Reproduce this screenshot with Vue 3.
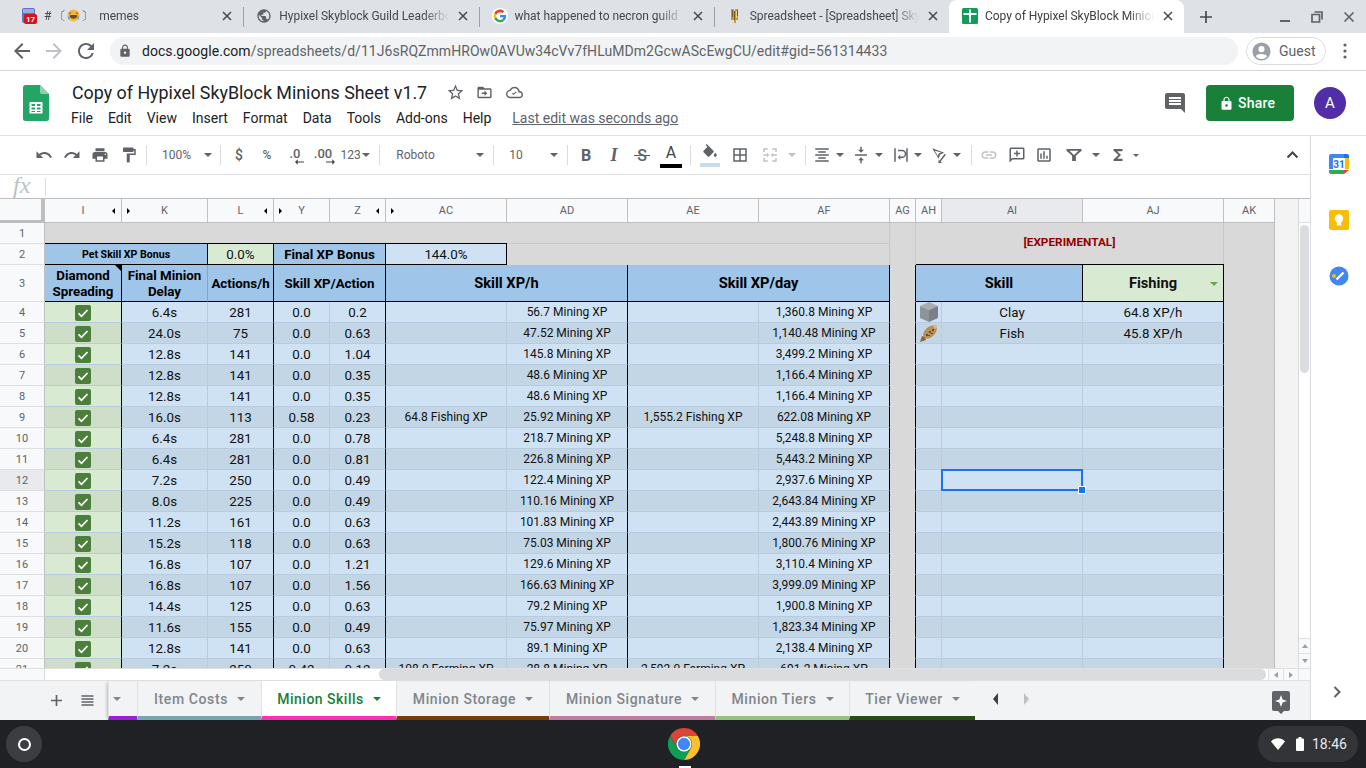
<script setup>
import { computed } from 'vue';

const browserTabs = [
  { id: 'discord', title: 'memes', prefix: '# 〔', suffix: '〕' },
  { id: 'globe', title: 'Hypixel Skyblock Guild Leaderboard' },
  { id: 'google', title: 'what happened to necron guild' },
  { id: 'sword', title: 'Spreadsheet - [Spreadsheet] Skyblock' },
  { id: 'sheets', title: 'Copy of Hypixel SkyBlock Minions Sheet', active: true },
];

const menus = ['File', 'Edit', 'View', 'Insert', 'Format', 'Data', 'Tools', 'Add-ons', 'Help'];

const P = {
  undo: 'M12.5 8c-2.65 0-5.05.99-6.9 2.6L2 7v9h9l-3.62-3.62c1.39-1.16 3.16-1.88 5.12-1.88 3.54 0 6.55 2.31 7.6 5.5l2.37-.78C21.08 11.03 17.15 8 12.5 8z',
  redo: 'M18.4 10.6C16.55 8.99 14.15 8 11.5 8c-4.65 0-8.58 3.03-9.96 7.22L3.9 16c1.05-3.19 4.05-5.5 7.6-5.5 1.95 0 3.73.72 5.12 1.88L13 16h9V7l-3.6 3.6z',
  print: 'M19 8H5c-1.66 0-3 1.34-3 3v6h4v4h12v-4h4v-6c0-1.66-1.34-3-3-3zm-3 11H8v-5h8v5zm3-7c-.55 0-1-.45-1-1s.45-1 1-1 1 .45 1 1-.45 1-1 1zm-1-9H6v4h12V3z',
  paint: 'M18 4V3c0-.55-.45-1-1-1H5c-.55 0-1 .45-1 1v4c0 .55.45 1 1 1h12c.55 0 1-.45 1-1V6h1v4H9v11c0 .55.45 1 1 1h2c.55 0 1-.45 1-1v-9h8V4h-3z',
  borders: 'M3 3v18h18V3H3zm8 16H5v-6h6v6zm0-8H5V5h6v6zm8 8h-6v-6h6v6zm0-8h-6V5h6v6z',
  merge: 'M3 3h6v2H5v3H3zM15 3h6v5h-2V5h-4zM3 16h2v3h4v2H3zM19 16h2v5h-6v-2h4zM3 11h5V9l3 3-3 3v-2H3zM21 11h-5V9l-3 3 3 3v-2h5z',
  align: 'M7 15v2h10v-2H7zm-4 6h18v-2H3v2zm0-8h18v-2H3v2zm4-6v2h10V7H7zM3 3v2h18V3H3z',
  valign: 'M8 19h3v4h2v-4h3l-4-4-4 4zm8-14h-3V1h-2v4H8l4 4 4-4zM4 11v2h16v-2H4z',
  wrap: 'M3 3h2v18H3zM19 3h2v18h-2zM8 7h5.5a3.5 3.5 0 0 1 0 7H11v-2.5L7.5 15l3.5 3.5V16h2.5a5.5 5.5 0 0 0 0-11H8z',
  rotate: 'M3 3l16 6-5.5 2.2L11.5 17zM6.4 6.2l4 7.2 1.2-3.4 3.4-1.2zM12.6 19.6l7-9.2 1.6 1.2-7 9.2 2 1.5-5 .7.4-4.9z',
  link: 'M3.9 12c0-1.71 1.39-3.1 3.1-3.1h4V7H7c-2.76 0-5 2.24-5 5s2.24 5 5 5h4v-1.9H7c-1.71 0-3.1-1.39-3.1-3.1zM8 13h8v-2H8v2zm9-6h-4v1.9h4c1.71 0 3.1 1.39 3.1 3.1s-1.39 3.1-3.1 3.1h-4V17h4c2.76 0 5-2.24 5-5s-2.24-5-5-5z',
  comment: 'M20 2H4c-1.1 0-2 .9-2 2v18l4-4h14c1.1 0 2-.9 2-2V4c0-1.1-.9-2-2-2zm0 14H5.17L4 17.17V4h16v12zM13 6h-2v3H8v2h3v3h2v-3h3V9h-3z',
  chart: 'M19 3H5c-1.1 0-2 .9-2 2v14c0 1.1.9 2 2 2h14c1.1 0 2-.9 2-2V5c0-1.1-.9-2-2-2zm0 16H5V5h14v14zM7 10h2v7H7zm4-3h2v10h-2zm4 6h2v4h-2z',
  filter: 'M2 4h20v2.2L14.5 13v7h-5v-7L2 6.2zM6 6.2l5.5 5.6h1L18 6.2z',
  sigma: 'M18 4H6v2l6.5 6L6 18v2h12v-3h-7l5-5-5-5h7z',
};

// c = horizontal centre of the toolbar item
const toolItems = [
  { c: 44, icon: 'undo' }, { c: 72, icon: 'redo' }, { c: 100, icon: 'print' }, { c: 129, icon: 'paint' },
  { c: 146.5, sep: true },
  { c: 176.5, text: '100%' }, { c: 208, arrow: true },
  { c: 220.5, sep: true },
  { c: 239, text: '$', money: true }, { c: 267, text: '%', small: true },
  { c: 295, dec: '.0', dir: 'left' }, { c: 323, dec: '.00', dir: 'right' },
  { c: 350.5, text: '123' }, { c: 366, arrow: true },
  { c: 379.5, sep: true },
  { c: 415.5, text: 'Roboto' }, { c: 480, arrow: true },
  { c: 493.5, sep: true },
  { c: 516, text: '10' }, { c: 554, arrow: true },
  { c: 567.5, sep: true },
  { c: 586, glyph: 'B', cls: 'g-b' }, { c: 614, glyph: 'I', cls: 'g-i' }, { c: 642, glyph: 'S', cls: 'g-s' }, { c: 671, glyph: 'A', cls: 'g-a' },
  { c: 690.5, sep: true },
  { c: 710, fill: true }, { c: 740, icon: 'borders' }, { c: 770, icon: 'merge', off: true }, { c: 792, arrow: true, off: true },
  { c: 805.5, sep: true },
  { c: 822, icon: 'align' }, { c: 840, arrow: true }, { c: 861, icon: 'valign' }, { c: 879, arrow: true },
  { c: 901, icon: 'wrap' }, { c: 918, arrow: true }, { c: 939, icon: 'rotate' }, { c: 957, arrow: true },
  { c: 971.5, sep: true },
  { c: 989, icon: 'link', off: true }, { c: 1017, icon: 'comment' }, { c: 1044, icon: 'chart' },
  { c: 1074, icon: 'filter' }, { c: 1096, arrow: true }, { c: 1118, icon: 'sigma' }, { c: 1136, arrow: true, small: true },
];

const tools = computed(() => toolItems.map((item, i) => ({
  ...item,
  gap: item.c - (i ? toolItems[i - 1].c : 0),
})));

const columns = [
  { n: 'I', hideR: true }, { n: 'K', hideL: true }, { n: 'L', hideR: true }, { n: 'Y', hideL: true },
  { n: 'Z', hideR: true }, { n: 'AC', hideL: true }, { n: 'AD' }, { n: 'AE' }, { n: 'AF' },
  { n: 'AG' }, { n: 'AH' }, { n: 'AI', sel: true }, { n: 'AJ' }, { n: 'AK' },
];

const rows = [
  ['6.4s', '281', '0.0', '0.2', '', '56.7 Mining XP', '', '1,360.8 Mining XP'],
  ['24.0s', '75', '0.0', '0.63', '', '47.52 Mining XP', '', '1,140.48 Mining XP'],
  ['12.8s', '141', '0.0', '1.04', '', '145.8 Mining XP', '', '3,499.2 Mining XP'],
  ['12.8s', '141', '0.0', '0.35', '', '48.6 Mining XP', '', '1,166.4 Mining XP'],
  ['12.8s', '141', '0.0', '0.35', '', '48.6 Mining XP', '', '1,166.4 Mining XP'],
  ['16.0s', '113', '0.58', '0.23', '64.8 Fishing XP', '25.92 Mining XP', '1,555.2 Fishing XP', '622.08 Mining XP'],
  ['6.4s', '281', '0.0', '0.78', '', '218.7 Mining XP', '', '5,248.8 Mining XP'],
  ['6.4s', '281', '0.0', '0.81', '', '226.8 Mining XP', '', '5,443.2 Mining XP'],
  ['7.2s', '250', '0.0', '0.49', '', '122.4 Mining XP', '', '2,937.6 Mining XP'],
  ['8.0s', '225', '0.0', '0.49', '', '110.16 Mining XP', '', '2,643.84 Mining XP'],
  ['11.2s', '161', '0.0', '0.63', '', '101.83 Mining XP', '', '2,443.89 Mining XP'],
  ['15.2s', '118', '0.0', '0.63', '', '75.03 Mining XP', '', '1,800.76 Mining XP'],
  ['16.8s', '107', '0.0', '1.21', '', '129.6 Mining XP', '', '3,110.4 Mining XP'],
  ['16.8s', '107', '0.0', '1.56', '', '166.63 Mining XP', '', '3,999.09 Mining XP'],
  ['14.4s', '125', '0.0', '0.63', '', '79.2 Mining XP', '', '1,900.8 Mining XP'],
  ['11.6s', '155', '0.0', '0.49', '', '75.97 Mining XP', '', '1,823.34 Mining XP'],
  ['12.8s', '141', '0.0', '0.63', '', '89.1 Mining XP', '', '2,138.4 Mining XP'],
  ['7.2s', '250', '0.42', '0.12', '108.0 Farming XP', '28.8 Mining XP', '2,592.0 Farming XP', '691.2 Mining XP'],
];

const skillRows = { 0: ['Clay', '64.8 XP/h'], 1: ['Fish', '45.8 XP/h'] };

const sheetTabs = [
  { name: '', width: 29, color: '#9a1fd6', partial: true },
  { name: 'Item Costs', width: 124, color: '#76a5af' },
  { name: 'Minion Skills', width: 135, color: '#ff2fba', active: true },
  { name: 'Minion Storage', width: 153, color: '#783f04' },
  { name: 'Minion Signature', width: 166, color: '#c27ba0' },
  { name: 'Minion Tiers', width: 134, color: '#93c47d' },
  { name: 'Tier Viewer', width: 126, color: '#274e13' },
];
</script>

<template>
  <div class="screen">
    <div class="tabstrip">
      <div v-for="tab in browserTabs" :key="tab.id" class="btab" :class="{ active: tab.active }">
        <svg v-if="tab.id === 'discord'" class="fav" viewBox="0 0 16 16">
          <rect x="1" y="0" width="13" height="15" rx="2" fill="#5b72c9" />
          <rect x="3" y="6" width="13" height="10" rx="2" fill="#d3141b" />
          <rect x="2" y="1" width="11" height="4" fill="#dfe3f5" opacity=".5" />
          <text x="9.5" y="14.3" class="badge">17</text>
        </svg>
        <svg v-else-if="tab.id === 'globe'" class="fav" viewBox="0 0 24 24"><path fill="#5f6368" d="M12 2C6.48 2 2 6.48 2 12s4.48 10 10 10 10-4.48 10-10S17.52 2 12 2zm-1 17.93c-3.95-.49-7-3.85-7-7.93 0-.62.08-1.21.21-1.79L9 15v1c0 1.1.9 2 2 2v1.93zm6.9-2.54c-.26-.81-1-1.39-1.9-1.39h-1v-3c0-.55-.45-1-1-1H8v-2h2c.55 0 1-.45 1-1V7h2c1.1 0 2-.9 2-2v-.41c2.93 1.19 5 4.06 5 7.41 0 2.08-.8 3.97-2.1 5.39z" /></svg>
        <svg v-else-if="tab.id === 'google'" class="fav" viewBox="-6 -6 60 60">
          <circle cx="24" cy="24" r="30" fill="#fff" />
          <path fill="#EA4335" d="M24 9.5c3.54 0 6.71 1.22 9.21 3.6l6.85-6.85C35.9 2.38 30.47 0 24 0 14.62 0 6.51 5.38 2.56 13.22l7.98 6.19C12.43 13.72 17.74 9.5 24 9.5z" />
          <path fill="#4285F4" d="M46.98 24.55c0-1.57-.15-3.09-.38-4.55H24v9.02h12.94c-.58 2.96-2.26 5.48-4.78 7.18l7.73 6c4.51-4.18 7.09-10.36 7.09-17.65z" />
          <path fill="#FBBC05" d="M10.53 28.59c-.48-1.45-.76-2.99-.76-4.59s.27-3.14.76-4.59l-7.98-6.19C.92 16.46 0 20.12 0 24c0 3.88.92 7.54 2.56 10.78l7.97-6.19z" />
          <path fill="#34A853" d="M24 48c6.48 0 11.93-2.13 15.89-5.81l-7.73-6c-2.15 1.45-4.92 2.3-8.16 2.3-6.26 0-11.57-4.22-13.47-9.91l-7.98 6.19C6.51 42.62 14.62 48 24 48z" />
        </svg>
        <svg v-else-if="tab.id === 'sword'" class="fav" viewBox="0 0 16 16">
          <path fill="#c99a2e" d="M4 1h3v2h1V1h3v11H9v3H7v-3H4z" />
          <path fill="#7b5a1e" d="M7 3h1v9H7zM5 2h1v7H5zM10 2h1v6h-1z" />
          <path fill="#e9d48a" d="M9 3h1v7H9z" />
        </svg>
        <svg v-else class="fav" viewBox="0 0 16 16">
          <rect width="16" height="16" rx="1.5" fill="#0f9d58" />
          <path fill="#fff" d="M7 1.5h2V5h5.500v2H9v7.500H7V7H1.500V5H7z" />
        </svg>
        <span class="btab-title">
          <template v-if="tab.prefix">
            {{ tab.prefix }}<svg class="emoji" viewBox="0 0 14 14">
              <circle cx="7" cy="7" r="6.5" fill="#f5b83d" />
              <path d="M3 6.5h8a4 4 0 0 1-8 0z" fill="#6e4a1c" />
              <path d="M2 5l2.5-1M12 5L9.5 4" stroke="#6e4a1c" fill="none" />
              <path d="M1 8h2v3H1zM11 8h2v3h-2z" fill="#5aa9e6" />
            </svg>{{ tab.suffix }}&nbsp;
          </template>{{ tab.title }}
        </span>
        <svg class="btab-x" viewBox="0 0 10 10"><path d="M1 1l8 8M9 1l-8 8" stroke="#45484d" stroke-width="1.5" /></svg>
      </div>
      <svg class="plus" viewBox="0 0 12 12"><path d="M6 0v12M0 6h12" stroke="#45484d" stroke-width="1.7" /></svg>
      <div class="winctl">
        <svg viewBox="0 0 12 12"><path d="M1 10h10" stroke="#5f6368" stroke-width="2" /></svg>
        <svg viewBox="0 0 12 12"><path d="M3.5 1h7.5v7.5M1 3.5h7.5V11H1z" fill="none" stroke="#5f6368" stroke-width="1.7" /></svg>
        <svg viewBox="0 0 12 12"><path d="M1.5 1.5l9 9M10.5 1.5l-9 9" stroke="#5f6368" stroke-width="1.7" /></svg>
      </div>
    </div>

    <div class="omnibar">
      <svg class="nav" viewBox="0 0 24 24"><path fill="#5f6368" d="M20 11H7.83l5.59-5.59L12 4l-8 8 8 8 1.41-1.41L7.83 13H20z" /></svg>
      <svg class="nav" viewBox="0 0 24 24"><path fill="#bdc1c6" d="M12 4l-1.41 1.41L16.17 11H4v2h12.17l-5.58 5.59L12 20l8-8z" /></svg>
      <svg class="nav" viewBox="0 0 24 24"><path fill="#5f6368" d="M17.65 6.35A7.96 7.96 0 0 0 12 4c-4.42 0-7.99 3.58-7.99 8s3.57 8 7.99 8c3.73 0 6.84-2.55 7.73-6h-2.08A5.99 5.99 0 0 1 12 18c-3.31 0-6-2.69-6-6s2.69-6 6-6c1.66 0 3.14.69 4.22 1.78L13 11h7V4l-2.35 2.35z" /></svg>
      <div class="urlbox">
        <svg class="lock" viewBox="0 0 24 24"><path fill="#5f6368" d="M18 8h-1V6c0-2.76-2.24-5-5-5S7 3.24 7 6v2H6c-1.1 0-2 .9-2 2v10c0 1.1.9 2 2 2h12c1.1 0 2-.9 2-2V10c0-1.1-.9-2-2-2zm-6 9c-1.1 0-2-.9-2-2s.9-2 2-2 2 .9 2 2-.9 2-2 2zm3.1-9H8.9V6c0-1.71 1.39-3.1 3.1-3.1 1.71 0 3.1 1.39 3.1 3.1v2z" /></svg>
        <span class="url"><b>docs.google.com</b>/spreadsheets/d/11J6sRQZmmHROw0AVUw34cVv7fHLuMDm2GcwAScEwgCU/edit#gid=561314433</span>
      </div>
      <div class="guest">
        <svg viewBox="0 0 20 20">
          <circle cx="10" cy="10" r="9.5" fill="#9aa0a6" />
          <circle cx="10" cy="7.5" r="3.2" fill="#fff" />
          <path d="M4 15c1-3 10-3 12 0-1.5 2-4 3-6 3s-4.5-1-6-3z" fill="#fff" />
        </svg>
        Guest
      </div>
      <svg class="dots" viewBox="0 0 4 16"><circle cx="2" cy="2" r="1.6" fill="#5f6368" /><circle cx="2" cy="8" r="1.6" fill="#5f6368" /><circle cx="2" cy="14" r="1.6" fill="#5f6368" /></svg>
    </div>

    <div class="docheader">
      <svg class="logo" viewBox="0 0 26 36">
        <path fill="#23a566" d="M2.5 0H17l9 9v24.5a2.5 2.5 0 0 1-2.5 2.5h-21A2.5 2.5 0 0 1 0 33.5v-31A2.5 2.5 0 0 1 2.5 0z" />
        <path fill="#8ed1b1" d="M17 0l9 9h-7a2 2 0 0 1-2-2z" />
        <path fill="#fff" d="M6.5 17h13v11.5h-13zm2 2v2H12v-2zm5.5 0v2h3.5v-2zm-5.5 3.5v2H12v-2zm5.500 0v2h3.500v-2zm-5.500 3.500v1H12v-1zm5.500 0v1h3.500v-1z" fill-rule="evenodd" />
      </svg>
      <div class="docinfo">
        <div class="titleline">
          <span class="doctitle">Copy of Hypixel SkyBlock Minions Sheet v1.7</span>
          <svg class="ti star" viewBox="0 0 24 24"><path fill="#5f6368" d="M22 9.24l-7.19-.62L12 2 9.19 8.63 2 9.24l5.46 4.73L5.82 21 12 17.27 18.18 21l-1.63-7.03L22 9.24zM12 15.4l-3.76 2.27 1-4.28-3.32-2.88 4.38-.38L12 6.1l1.71 4.04 4.38.38-3.32 2.88 1 4.28L12 15.4z" /></svg>
          <svg class="ti folder" viewBox="0 0 24 24"><path fill="#5f6368" fill-rule="evenodd" d="M20 6h-8l-2-2H4c-1.1 0-2 .9-2 2v12c0 1.1.9 2 2 2h16c1.1 0 2-.9 2-2V8c0-1.1-.9-2-2-2zm0 12H4V8h16v10zM12 9l4 4-4 4v-3H8v-2h4z" /></svg>
          <svg class="ti" viewBox="0 0 24 24"><path fill="#5f6368" d="M19.35 10.04C18.67 6.59 15.64 4 12 4 9.11 4 6.6 5.64 5.35 8.04 2.34 8.36 0 10.91 0 14c0 3.31 2.69 6 6 6h13c2.76 0 5-2.24 5-5 0-2.64-2.05-4.78-4.65-4.96zM19 18H6c-2.21 0-4-1.79-4-4s1.79-4 4-4h.71C7.37 7.69 9.48 6 12 6c3.04 0 5.5 2.46 5.5 5.5v.5H19c1.66 0 3 1.34 3 3s-1.34 3-3 3zM10.5 15.5l-2-2 1-1 1 1 3.5-3 1 1z" /></svg>
        </div>
        <div class="menubar">
          <span v-for="m in menus" :key="m">{{ m }}</span>
          <span class="lastedit">Last edit was seconds ago</span>
        </div>
      </div>
      <svg class="chat" viewBox="0 0 24 24"><path fill="#5f6368" d="M21.99 4c0-1.1-.89-2-1.99-2H4c-1.1 0-2 .9-2 2v12c0 1.1.9 2 2 2h14l4 4-.01-18zM18 14H6v-2h12v2zm0-3H6V9h12v2zm0-3H6V6h12v2z" /></svg>
      <div class="share">
        <svg viewBox="0 0 24 24"><path fill="#fff" d="M18 8h-1V6c0-2.76-2.24-5-5-5S7 3.24 7 6v2H6c-1.1 0-2 .9-2 2v10c0 1.1.9 2 2 2h12c1.1 0 2-.9 2-2V10c0-1.1-.9-2-2-2zm-6 9c-1.1 0-2-.9-2-2s.9-2 2-2 2 .9 2 2-.9 2-2 2zm3.1-9H8.9V6c0-1.71 1.39-3.1 3.1-3.1 1.71 0 3.1 1.39 3.1 3.1v2z" /></svg>
        Share
      </div>
      <div class="avatar">A</div>
    </div>

    <div class="workspace">
      <div class="main">
        <div class="toolbar">
          <div
            v-for="(t, i) in tools"
            :key="i"
            class="slot"
            :class="{ off: t.off }"
            :style="{ marginLeft: t.gap + 'px' }"
          >
            <i v-if="t.sep" class="sep"></i>
            <i v-else-if="t.arrow" class="tri" :class="{ small: t.small }"></i>
            <svg v-else-if="t.icon" class="tool" viewBox="0 0 24 24"><path :d="P[t.icon]" fill-rule="evenodd" /></svg>
            <span v-else-if="t.text" class="tooltext" :class="{ money: t.money, small: t.small }">{{ t.text }}</span>
            <span v-else-if="t.glyph" class="glyph" :class="t.cls">{{ t.glyph }}</span>
            <span v-else-if="t.dec" class="dec">{{ t.dec }}
              <svg viewBox="0 0 10 6">
                <path v-if="t.dir === 'left'" d="M10 2.4H3V0L0 3l3 3V3.6h7z" fill="#444" />
                <path v-else d="M0 2.4h7V0l3 3-3 3V3.6H0z" fill="#444" />
              </svg>
            </span>
            <svg v-else-if="t.fill" class="tool fillicon" viewBox="0 0 24 24"><path d="M16.56 8.94L7.62 0 6.21 1.41l2.38 2.38-5.15 5.15c-.59.59-.59 1.54 0 2.12l5.5 5.5c.29.29.68.44 1.06.44s.77-.15 1.06-.44l5.5-5.5c.59-.58.59-1.53 0-2.12zM19 11.5s-2 2.17-2 3.5c0 1.1.9 2 2 2s2-.9 2-2c0-1.33-2-3.5-2-3.5z" /></svg>
            <i v-if="t.fill" class="fillbar"></i>
          </div>
          <svg class="collapse" viewBox="0 0 12 8"><path d="M1 6.5l5-5 5 5" fill="none" stroke="#444" stroke-width="2" /></svg>
        </div>

        <div class="formula">
          <span class="fx">fx</span>
          <i class="fxsep"></i>
        </div>

        <div class="gridarea">
          <div class="sheet">
            <div class="corner"></div>
            <div
              v-for="c in columns"
              :key="c.n"
              class="colhead"
              :class="{ selected: c.sel }"
            >
              <i v-if="c.hideR" class="hide hide-r"></i>
              {{ c.n }}
              <i v-if="c.hideL" class="hide hide-l"></i>
            </div>

            <div class="rownum">1</div>
            <div class="cell gray span9 lined"></div>
            <div class="cell gray faint"></div>
            <div class="cell gray exp">[EXPERIMENTAL]</div>
            <div class="cell gray end"></div>

            <div class="rownum">2</div>
            <div class="cell head2 span2 topline small">Pet Skill XP Bonus</div>
            <div class="cell green topline bk">0.0%</div>
            <div class="cell head2 span2 topline">Final XP Bonus</div>
            <div class="cell plain topline bk">144.0%</div>
            <div class="cell gray span3 faint"></div>
            <div class="cell gray faint"></div>
            <div class="cell gray end"></div>

            <div class="rownum">3</div>
            <div class="cell head bk rel">Diamond Spreading<i class="note"></i></div>
            <div class="cell head softline">Final Minion Delay</div>
            <div class="cell head bk">Actions/h</div>
            <div class="cell head bk span2">Skill XP/Action</div>
            <div class="cell head bk span2 big">Skill XP/h</div>
            <div class="cell head bk span2 big">Skill XP/day</div>
            <div class="cell gray bk"></div>
            <div class="cell head bk span2 big topline">Skill</div>
            <div class="cell headgreen bk big topline rel">Fishing<i class="drop"></i></div>
            <div class="cell gray end"></div>

            <template v-for="(r, i) in rows" :key="i">
              <div class="rownum" :class="{ selected: i === 8 }">{{ i + 4 }}</div>
              <div class="cell check bk" :class="{ alt: i % 2 }">
                <svg viewBox="0 0 16 16">
                  <rect width="16" height="16" rx="2" fill="#4c7f3b" />
                  <path d="M3.5 8.3l3 3 6-6.3" fill="none" stroke="#fff" stroke-width="1.7" />
                </svg>
              </div>
              <div class="cell" :class="{ alt: i % 2 }">{{ r[0] }}</div>
              <div class="cell bk" :class="{ alt: i % 2 }">{{ r[1] }}</div>
              <div class="cell" :class="{ alt: i % 2 }">{{ r[2] }}</div>
              <div class="cell bk" :class="{ alt: i % 2 }">{{ r[3] }}</div>
              <div class="cell xp" :class="{ alt: i % 2 }">{{ r[4] }}</div>
              <div class="cell xp bk" :class="{ alt: i % 2 }">{{ r[5] }}</div>
              <div class="cell xp" :class="{ alt: i % 2 }">{{ r[6] }}</div>
              <div class="cell xp bk" :class="{ alt: i % 2 }">{{ r[7] }}</div>
              <div class="cell gray bk"></div>
              <div class="cell iconcell" :class="{ alt: i % 2 }">
                <svg v-if="i === 0" viewBox="0 0 20 20">
                  <path fill="#a8acb3" d="M10 0l9 4-9 4-9-4z" />
                  <path fill="#8f949b" d="M1 4l9 4v12l-9-4z" />
                  <path fill="#7b8088" d="M19 4l-9 4v12l9-4z" />
                </svg>
                <svg v-else-if="i === 1" viewBox="0 0 20 20">
                  <path fill="#8a6536" d="M1 19l2-6 3 1 1 3z" />
                  <ellipse cx="11" cy="9" rx="8" ry="5" transform="rotate(-42 11 9)" fill="#b98f5a" />
                  <path fill="#d9b98a" d="M14 3l3-2 1 3-2 2z" />
                  <path fill="#6f4d24" d="M7 11h2v2H7zM10 8h2v2h-2zM13 6h2v2h-2zM9 12h2v1H9zM12 10h2v1h-2z" />
                </svg>
              </div>
              <div class="cell rel" :class="{ alt: i % 2 }">
                {{ skillRows[i] ? skillRows[i][0] : '' }}
                <i v-if="i === 8" class="selbox"><b></b></i>
              </div>
              <div class="cell bk" :class="{ alt: i % 2 }">{{ skillRows[i] ? skillRows[i][1] : '' }}</div>
              <div class="cell gray end"></div>
            </template>
          </div>
          <div class="offgrid"></div>
          <div class="vscroll">
            <div class="vhead"></div>
            <div class="vtrack"><div class="vthumb"></div></div>
            <div class="vbtn"><i class="up"></i></div>
            <div class="vbtn"><i class="down"></i></div>
          </div>
        </div>

        <div class="hscroll">
          <div class="hgutter"></div>
          <div class="htrack"><div class="hthumb"></div></div>
          <div class="hbtn"><i class="left"></i></div>
          <div class="hbtn"><i class="right"></i></div>
          <div class="hbtn blank"></div>
        </div>

        <div class="sheetbar">
          <svg class="addsheet" viewBox="0 0 12 12"><path d="M6 0v12M0 6h12" stroke="#5f6368" stroke-width="1.8" /></svg>
          <svg class="allsheets" viewBox="0 0 12 12"><path d="M0 1h12M0 4h12M0 7h12M0 10h12" stroke="#5f6368" stroke-width="1.5" /></svg>
          <div class="tabs">
            <div
              v-for="s in sheetTabs"
              :key="s.name"
              class="stab"
              :class="{ active: s.active, partial: s.partial }"
              :style="{ width: s.width + 'px', borderBottomColor: s.color }"
            >
              {{ s.name }}<i class="stri"></i>
            </div>
          </div>
          <i class="pager pl"></i>
          <i class="pager pr"></i>
          <svg class="explore" viewBox="0 0 18 23">
            <path fill="#5f6368" d="M2 0h14a2 2 0 0 1 2 2v16a2 2 0 0 1-2 2h-4l-3 3-3-3H2a2 2 0 0 1-2-2V2a2 2 0 0 1 2-2z" />
            <path fill="#fff" d="M9 4l1.6 4.4L15 10l-4.4 1.6L9 16l-1.6-4.4L3 10l4.4-1.600z" />
          </svg>
        </div>
      </div>

      <aside class="sidepanel">
        <svg viewBox="0 0 20 20" class="side">
          <path fill="#fff" d="M4 4h12v12H4z" />
          <path fill="#4285f4" d="M2 0h13v4H4v11H0V2a2 2 0 0 1 2-2z" />
          <path fill="#1a73e8" d="M15 0h3a2 2 0 0 1 2 2v2h-5z" />
          <path fill="#fbbc04" d="M16 4h4v11h-4z" />
          <path fill="#34a853" d="M4 16h11v4H2a2 2 0 0 1-2-2v-2z" />
          <path fill="#ea4335" d="M15 16h5l-5 4z" />
          <text x="10" y="14" class="cal">31</text>
        </svg>
        <svg viewBox="0 0 20 20" class="side">
          <rect width="20" height="20" rx="2" fill="#fbbc04" />
          <circle cx="10" cy="8.5" r="4.2" fill="#fff" />
          <rect x="7.8" y="12" width="4.4" height="3.5" fill="#fff" />
        </svg>
        <svg viewBox="0 0 20 20" class="side">
          <circle cx="10" cy="10" r="9.5" fill="#4285f4" />
          <path d="M7.5 13.5l7-7" stroke="#fff" stroke-width="2.4" />
          <circle cx="5" cy="10" r="2" fill="#fbbc04" />
        </svg>
        <svg viewBox="0 0 8 12" class="sidechev"><path d="M1.5 1l5 5-5 5" fill="none" stroke="#5f6368" stroke-width="2" /></svg>
      </aside>
    </div>

    <div class="shelf">
      <div class="launcher"><i></i></div>
      <div class="shelfapp">
        <svg viewBox="0 0 48 48">
          <path fill="#db4437" d="M24 0a24 24 0 0 1 20.8 12H24a12 12 0 0 0-10.4 18L3.2 12A24 24 0 0 1 24 0z" />
          <path fill="#fbc02d" d="M44.8 12A24 24 0 0 1 24 48l10.4-18A12 12 0 0 0 24 12z" />
          <path fill="#0f9d58" d="M24 48A24 24 0 0 1 3.2 12l10.4 18a12 12 0 0 0 20.8 0z" />
          <circle cx="24" cy="24" r="11.5" fill="#fff" />
          <circle cx="24" cy="24" r="9.2" fill="#4285f4" />
        </svg>
        <i class="running"></i>
      </div>
      <div class="status">
        <svg viewBox="0 0 14 12" class="wifi"><path fill="#fff" d="M0 3.5C4-.9 10-.9 14 3.5L7 12z" /></svg>
        <svg viewBox="0 0 8 14" class="battery"><path fill="#fff" d="M2.5 0h3v1.5H7a1 1 0 0 1 1 1V13a1 1 0 0 1-1 1H1a1 1 0 0 1-1-1V2.5a1 1 0 0 1 1-1h1.5z" /></svg>
        <span>18:46</span>
      </div>
    </div>
  </div>
</template>

<style>
html, body {
  margin: 0;
  overflow: hidden;
}
</style>

<style scoped>
.screen {
  width: 1366px;
  height: 768px;
  display: flex;
  flex-direction: column;
  overflow: hidden;
  background: #fff;
  font-family: Roboto, "Liberation Sans", sans-serif;
  color: #000;
}

i { font-style: normal; display: block; }

/* browser tabs */
.tabstrip {
  height: 33px;
  flex: none;
  background: #dee1e6;
  display: flex;
  align-items: center;
  padding-left: 8px;
  position: relative;
}
.btab {
  width: 235.25px;
  height: 33px;
  flex: none;
  display: flex;
  align-items: center;
  box-sizing: border-box;
  padding: 0 10px 1px 13px;
  position: relative;
  font-size: 12px;
  letter-spacing: -.03px;
  color: #45484d;
}
.btab + .btab::before {
  content: '';
  position: absolute;
  left: 0;
  top: 7px;
  height: 20px;
  width: 1px;
  background: #9aa0a6;
}
.btab.active {
  background: #fff;
  border-radius: 8px 8px 0 0;
  color: #3c4043;
}
.btab.active::before { display: none; }
.fav { width: 16px; height: 16px; flex: none; margin-right: 7px; }
.badge { font: bold 8px Roboto, sans-serif; fill: #fff; text-anchor: middle; }
.emoji { width: 13px; height: 13px; vertical-align: -2px; margin: 0 1px; }
.btab-title {
  flex: 1;
  white-space: nowrap;
  overflow: hidden;
  -webkit-mask-image: linear-gradient(90deg, #000 85%, transparent 100%);
  mask-image: linear-gradient(90deg, #000 85%, transparent 100%);
  margin-right: 9px;
}
.btab-x { width: 10px; height: 10px; flex: none; margin-right: 1px; }
.plus { width: 12px; height: 12px; margin-left: 16px; flex: none; }
.winctl {
  margin-left: auto;
  display: flex;
  gap: 20px;
  padding-right: 11px;
}
.winctl svg { width: 12px; height: 12px; }

/* omnibox */
.omnibar {
  height: 38px;
  flex: none;
  box-sizing: border-box;
  display: flex;
  align-items: center;
  border-bottom: 1px solid #d4d6d9;
  padding: 0 0 1px 10px;
}
.nav { width: 24px; height: 24px; flex: none; margin-right: 8px; }
.urlbox {
  width: 1128px;
  height: 28px;
  margin-left: 4px;
  background: #f1f3f4;
  border-radius: 14px;
  display: flex;
  align-items: center;
  box-sizing: border-box;
  padding-left: 8px;
}
.lock { width: 14px; height: 14px; margin-right: 10px; flex: none; }
.url { font-size: 14px; color: #5f6368; white-space: nowrap; letter-spacing: .05px; }
.url b { font-weight: 400; color: #202124; }
.guest {
  width: 80px;
  height: 28px;
  box-sizing: border-box;
  margin-left: 8px;
  border: 1px solid #dadce0;
  border-radius: 14px;
  display: flex;
  align-items: center;
  gap: 8px;
  padding-left: 5px;
  font-size: 14px;
  color: #5f6368;
}
.guest svg { width: 19px; height: 19px; }
.dots { width: 4px; height: 16px; margin-left: 17px; }

/* docs header */
.docheader {
  height: 64px;
  flex: none;
  display: flex;
  align-items: center;
  position: relative;
  padding-left: 23px;
  box-sizing: border-box;
}
.logo { width: 26px; height: 36px; flex: none; }
.docinfo { margin-left: 22px; width: 640px; flex: none; padding-bottom: 1px; }
.titleline {
  display: flex;
  align-items: center;
  height: 28px;
  padding-top: 4px;
  box-sizing: border-box;
}
.doctitle { font-size: 17.85px; color: #202124; white-space: nowrap; margin-left: 1px; }
.ti { width: 17px; height: 17px; margin-left: 13px; flex: none; }
.star { width: 19px; height: 19px; margin-left: 19px; }
.folder { margin-left: 11px; }
.menubar {
  display: flex;
  gap: 15px;
  font-size: 14px;
  color: #202124;
  height: 22px;
  align-items: center;
  margin-top: 3px;
}
.lastedit {
  margin-left: 6px;
  color: #5f6368;
  text-decoration: underline;
}
.chat { width: 24px; height: 24px; margin-left: 452px; flex: none; }
.share {
  width: 88px;
  height: 36px;
  margin-left: 19px;
  flex: none;
  background: #188038;
  border-radius: 4px;
  color: #fff;
  font-size: 14px;
  font-weight: 500;
  letter-spacing: .25px;
  display: flex;
  align-items: center;
  gap: 4px;
  padding-left: 13px;
  box-sizing: border-box;
}
.share svg { width: 15px; height: 15px; }
.avatar {
  width: 32px;
  height: 32px;
  margin-left: 20px;
  flex: none;
  border-radius: 50%;
  background: #512da8;
  color: #fff;
  font-size: 15px;
  display: flex;
  align-items: center;
  justify-content: center;
}

/* body */
.workspace { flex: 1; min-height: 0; display: flex; }
.main { width: 1310px; flex: none; display: flex; flex-direction: column; min-height: 0; }

.toolbar {
  height: 40px;
  flex: none;
  box-sizing: border-box;
  border-top: 1px solid #e0e0e0;
  border-bottom: 1px solid #e0e0e0;
  display: flex;
  align-items: center;
  position: relative;
}
.slot {
  flex: none;
  width: 0;
  height: 24px;
  display: flex;
  align-items: center;
  justify-content: center;
  position: relative;
  color: #444;
  white-space: nowrap;
}
.slot.off { opacity: .4; }
.sep { width: 1px; height: 20px; background: #dadce0; flex: none; }
.tri {
  width: 0;
  height: 0;
  border: 4px solid transparent;
  border-top: 4px solid #5f6368;
  border-bottom: 0;
  flex: none;
}
.tri.small { border-width: 3px 3px 0; }
.tool { width: 18px; height: 18px; flex: none; fill: #5f6368; overflow: visible; }
.tooltext { font-size: 12px; color: #5f6368; flex: none; }
.tooltext.money { font-size: 14px; font-weight: 500; }
.tooltext.small { font-size: 12px; font-weight: 500; }
.dec {
  font-size: 13px;
  font-weight: 500;
  color: #5f6368;
  position: relative;
  line-height: 1;
  margin-top: -3px;
  flex: none;
}
.dec svg { position: absolute; width: 9px; height: 6px; right: -3px; bottom: -5px; }
.glyph { font-size: 16px; font-weight: 700; color: #5f6368; position: relative; flex: none; }
.g-i { font-family: "Liberation Serif", serif; font-style: italic; font-size: 18px; }
.g-s { font-weight: 500; }
.g-s::after {
  content: '';
  position: absolute;
  left: -3px;
  right: -3px;
  top: 9px;
  height: 1.5px;
  background: #5f6368;
}
.g-a {
  font-weight: 400;
  font-size: 16px;
  color: #444;
  line-height: 16px;
  margin-top: -4px;
}
.g-a::after {
  content: '';
  position: absolute;
  left: -6px;
  right: -6px;
  bottom: -7px;
  height: 4px;
  background: #000;
}
.fillicon { transform: translateY(-2px); }
.fillbar {
  position: absolute;
  left: -10px;
  width: 20px;
  bottom: 0;
  height: 4px;
  background: #c6dcef;
}
.collapse { position: absolute; left: 1286px; top: 15px; width: 13px; height: 8px; }

.formula {
  height: 24px;
  flex: none;
  box-sizing: border-box;
  border-bottom: 1px solid #bdbdbd;
  display: flex;
  align-items: center;
}
.fx {
  width: 45px;
  padding: 0 0 4px 13px;
  box-sizing: border-box;
  font-family: "Liberation Serif", serif;
  font-style: italic;
  font-size: 24px;
  line-height: 20px;
  color: #bdc1c6;
}
.fxsep { width: 1px; height: 18px; background: #dadce0; }

/* grid */
.gridarea { height: 469px; flex: none; display: flex; overflow: hidden; }
.sheet {
  width: 1275px;
  flex: none;
  display: grid;
  grid-template-columns: 45px 77px 86px 66px 56px 56px 121px 121px 131px 131px 26px 26px 141px 141px 51px;
  grid-template-rows: 24px 21px 21px 37px;
  grid-auto-rows: 21px;
  align-content: start;
  font-size: 13.33px;
  overflow: hidden;
}
.corner {
  background: #f8f9fa;
  border-right: 4px solid #bebebe;
  border-bottom: 3px solid #bebebe;
  box-sizing: border-box;
}
.colhead {
  background: #f8f9fa;
  border-right: 1px solid #c0c0c0;
  border-bottom: 1px solid #c0c0c0;
  box-sizing: border-box;
  font-size: 11px;
  color: #5f6368;
  display: flex;
  align-items: center;
  justify-content: center;
  position: relative;
}
.colhead.selected, .rownum.selected { background: #e8eaed; }
.hide {
  position: absolute;
  top: 9px;
  width: 0;
  height: 0;
  border: 3.5px solid transparent;
}
.hide-r { right: 6px; border-right-color: #000; border-left: 0; }
.hide-l { left: 5px; border-left-color: #000; border-right: 0; }
.rownum {
  background: #f8f9fa;
  border-right: 1px solid #c0c0c0;
  border-bottom: 1px solid #e0e0e0;
  box-sizing: border-box;
  font-size: 11px;
  color: #5f6368;
  display: flex;
  align-items: center;
  justify-content: center;
}
.cell {
  background: #cfe2f3;
  box-sizing: border-box;
  border-right: 1px solid #b7cce0;
  border-bottom: 1px solid #b7cce0;
  display: flex;
  align-items: center;
  justify-content: center;
  text-align: center;
  line-height: 16px;
  color: #111;
  white-space: nowrap;
  min-width: 0;
  padding-top: 1px;
}
.cell.alt { background: #c3d6e6; }
.cell.xp { font-size: 12px; padding-top: 0; }
.cell.bk { border-right-color: #000; }
.rel { position: relative; }
.span2 { grid-column: span 2; }
.span3 { grid-column: span 3; }
.span9 { grid-column: span 9; }
.gray {
  background: #d9d9d9;
  border-bottom-color: #d9d9d9;
  border-right-color: #d9d9d9;
}
.faint { border-right-color: #c8c8c8; }
.lined { border-bottom-color: #c8c8c8; border-right-color: #c8c8c8; }
.end { border-right-color: #bdbdbd; }
.exp {
  grid-column: span 3;
  grid-row: span 2;
  color: #980000;
  font-size: 11.8px;
  font-weight: 700;
  padding: 0 0 3px;
  border-right-color: #c8c8c8;
}
.topline { box-shadow: 0 -1px 0 #000; }
.head, .head2 {
  background: #9fc5e8;
  color: #000;
  font-weight: 700;
  border-bottom-color: #000;
  border-right-color: #000;
}
.head { white-space: normal; }
.head.softline { border-right-color: #7fa6c9; }
.head2.small { font-size: 10.6px; }
.green {
  background: #d9ead3;
  border-bottom-color: #000;
}
.plain { border-bottom-color: #000; }
.headgreen {
  background: #d9ead3;
  font-weight: 700;
  border-bottom-color: #000;
}
.big { font-size: 14.67px; padding-top: 0; }
.note {
  position: absolute;
  top: 0;
  right: 0;
  border-top: 6px solid #000;
  border-left: 6px solid transparent;
}
.drop {
  position: absolute;
  right: 5px;
  top: 17px;
  border: 4px solid transparent;
  border-top: 4px solid #6aa84f;
  border-bottom: 0;
}
.check { background: #d9ead3; }
.check.alt { background: #cedec8; }
.check svg { width: 16px; height: 16px; }
.iconcell { padding-top: 0; }
.iconcell svg { width: 20px; height: 20px; }
.selbox {
  position: absolute;
  left: -1px;
  top: -1px;
  right: -1px;
  bottom: -1px;
  border: 2px solid #1a73e8;
  z-index: 2;
}
.selbox b {
  position: absolute;
  right: -5px;
  bottom: -5px;
  width: 6px;
  height: 6px;
  background: #1a73e8;
  border: 1px solid #fff;
}
.offgrid { width: 23px; flex: none; background: #f3f3f3; border-right: 1px solid #dadada; }
.vscroll { width: 11px; flex: none; display: flex; flex-direction: column; background: #fff; }
.vhead { height: 24px; flex: none; background: #f8f9fa; border-bottom: 1px solid #dadce0; box-sizing: border-box; }
.vtrack { flex: 1; padding: 2px 1px 0; min-height: 0; }
.vthumb { height: 148px; background: #dadce0; border-radius: 5px; width: 9px; }
.vbtn {
  height: 15px;
  flex: none;
  box-sizing: border-box;
  border-top: 1px solid #e0e0e0;
  display: flex;
  align-items: center;
  justify-content: center;
  background: #f8f9fa;
}
.up { border: 3.5px solid transparent; border-bottom: 4px solid #9aa0a6; border-top: 0; }
.down { border: 3.5px solid transparent; border-top: 4px solid #9aa0a6; border-bottom: 0; }
.left { border: 3.5px solid transparent; border-right: 4px solid #9aa0a6; border-left: 0; }
.right { border: 3.5px solid transparent; border-left: 4px solid #9aa0a6; border-right: 0; }

.hscroll {
  height: 12px;
  flex: none;
  display: flex;
  border-top: 1px solid #e0e0e0;
  box-sizing: border-box;
}
.hgutter { width: 45px; flex: none; background: #f8f9fa; border-right: 1px solid #dadce0; box-sizing: border-box; }
.htrack { flex: 1; min-width: 0; padding: 0 2px 0 334px; background: #fff; }
.hthumb { height: 11px; background: #dadce0; border-radius: 5px; }
.hbtn {
  width: 15px;
  flex: none;
  box-sizing: border-box;
  border-left: 1px solid #e0e0e0;
  display: flex;
  align-items: center;
  justify-content: center;
  background: #f8f9fa;
}
.hbtn.blank { width: 12px; }

/* sheet tabs */
.sheetbar {
  height: 40px;
  flex: none;
  display: flex;
  background: #f1f3f4;
  border-top: 1px solid #e0e0e0;
  box-sizing: border-box;
  align-items: center;
  position: relative;
}
.addsheet { width: 11px; height: 11px; margin-left: 51px; flex: none; }
.allsheets { width: 13px; height: 12px; margin-left: 19px; flex: none; }
.tabs {
  display: flex;
  margin-left: 14px;
  height: 39px;
  align-self: flex-end;
  box-shadow: -3px 0 3px -2px rgba(0, 0, 0, .25);
}
.stab {
  box-sizing: border-box;
  border-left: 1px solid #dfe1e4;
  border-bottom: 4px solid;
  display: flex;
  align-items: center;
  justify-content: center;
  gap: 9px;
  color: #80868b;
  font-size: 14px;
  font-weight: 500;
  letter-spacing: .6px;
  flex: none;
  white-space: nowrap;
}
.stab.active { background: #fff; color: #188038; letter-spacing: .5px; }
.stri {
  border: 4px solid transparent;
  border-top: 4px solid #80868b;
  border-bottom: 0;
}
.stab.active .stri { border-top-color: #188038; }
.stab.partial .stri { margin-right: 12px; }
.pager { margin-top: -4px; flex: none; }
.pl { margin-left: 18px; border: 6px solid transparent; border-right: 5px solid #3c4043; border-left: 0; }
.pr { margin-left: 26px; border: 6px solid transparent; border-left: 5px solid #bdc1c6; border-right: 0; }
.explore { width: 18px; height: 23px; position: absolute; left: 1272px; top: 10px; }

/* side panel */
.sidepanel {
  flex: 1;
  border-left: 1px solid #dadce0;
  border-top: 1px solid #e0e0e0;
  display: flex;
  flex-direction: column;
  align-items: center;
  padding-top: 18px;
  gap: 36px;
  position: relative;
}
.side { width: 20px; height: 20px; flex: none; margin-left: 1px; }
.cal { font: bold 10px Roboto, sans-serif; fill: #1a73e8; text-anchor: middle; }
.sidechev { position: absolute; left: 22px; top: 550px; width: 8px; height: 12px; }

/* shelf */
.shelf {
  height: 48px;
  flex: none;
  background: #202124;
  display: flex;
  align-items: center;
  position: relative;
}
.launcher {
  width: 36px;
  height: 36px;
  margin-left: 6px;
  border-radius: 50%;
  background: #3c3d40;
  display: flex;
  align-items: center;
  justify-content: center;
}
.launcher i {
  width: 13px;
  height: 13px;
  border: 2px solid #fff;
  border-radius: 50%;
  box-sizing: border-box;
}
.shelfapp { margin-left: 626px; position: relative; height: 32px; flex: none; }
.shelfapp svg { width: 32px; height: 32px; display: block; }
.running {
  position: absolute;
  left: 11px;
  bottom: -8px;
  width: 12px;
  height: 2px;
  background: #fff;
}
.status {
  margin-left: auto;
  margin-right: 8px;
  width: 100px;
  height: 36px;
  border-radius: 18px;
  background: #333437;
  display: flex;
  align-items: center;
  padding-left: 13px;
  box-sizing: border-box;
  color: #e8eaed;
  font-size: 14px;
  flex: none;
}
.wifi { width: 14px; height: 12px; }
.battery { width: 8px; height: 14px; margin: 0 8px 0 11px; }
</style>
